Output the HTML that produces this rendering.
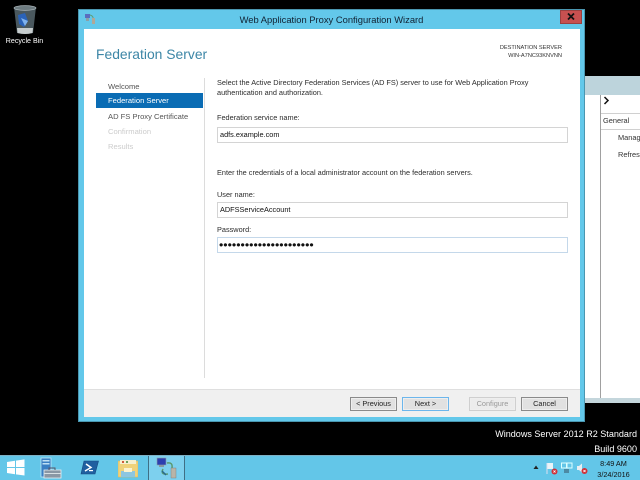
<!DOCTYPE html>
<html><head><meta charset="utf-8"><style>
html,body{margin:0;padding:0;background:#000;width:640px;height:480px;overflow:hidden}
body{position:relative;font-family:"Liberation Sans",sans-serif;font-size:7.33px;color:#2c2c2c}
.a{position:absolute;white-space:nowrap}
.inp{position:absolute;left:217px;width:349px;height:14px;background:#fff;border:1px solid #d4d4d4;font-size:7.33px;line-height:14px;color:#111;text-indent:2px}
.btn{position:absolute;top:397px;height:12px;background:#e1e1e1;border:1px solid #8a8a8a;box-shadow:inset 0 0 0 1px #eee;font-size:7.33px;line-height:12px;text-align:center;color:#222}
.n{left:108px;font-size:7.6px;line-height:10px}
</style></head><body>

<svg class="a" style="left:12px;top:4px" width="26" height="30" viewBox="0 0 26 30">
<path d="M2 3 L24 3 L21 29 Q13 31 5 29Z" fill="#4a585e"/>
<ellipse cx="13" cy="4" rx="11" ry="2.4" fill="#6d7b80" stroke="#aab4b8" stroke-width=".7"/>
<path d="M6 11 L13 9 L16 17 L12 23 L7 20Z" fill="#2a62b8"/>
<path d="M9 14 L16 17 L13 22Z" fill="#7fb2ee"/>
<path d="M5 24 L21 24 L20.500 29 Q13 31 5.500 29Z" fill="#c6cccd"/>
</svg>
<div class="a" style="left:0;width:49px;top:36px;text-align:center;color:#fff;font-size:7.100px;line-height:11px;">Recycle Bin</div>

<!-- background window -->
<div class="a" style="left:585px;top:76px;width:55px;height:327px;background:#fff"></div>
<div class="a" style="left:585px;top:76px;width:55px;height:19px;background:#bdd4dc"></div>
<div class="a" style="left:585px;top:398px;width:55px;height:5px;background:#c4d6dc"></div>
<div class="a" style="left:600px;top:95px;width:1px;height:303px;background:#a0a0a0"></div>
<div class="a" style="left:601px;top:113px;width:39px;height:1px;background:#d0d0d0"></div>
<div class="a" style="left:601px;top:129px;width:39px;height:1px;background:#d0d0d0"></div>
<svg class="a" style="left:603px;top:96px" width="7" height="9" viewBox="0 0 7 9"><path d="M1.500 1 L5 4.500 L1.500 8" fill="none" stroke="#111" stroke-width="1.500"/></svg>
<div class="a" style="left:603px;top:116px;font-size:7.400px;line-height:10px;color:#333">General</div>
<div class="a" style="left:618px;top:133px;font-size:7.400px;line-height:10px;color:#333">Manag</div>
<div class="a" style="left:618px;top:150px;font-size:7.400px;line-height:10px;color:#333">Refresh</div>

<!-- wizard window -->
<div class="a" style="left:79px;top:10px;width:505px;height:411px;background:#63c8ea;box-shadow:0 0 0 1px #4a96b0"></div>
<svg class="a" style="left:85px;top:13px" width="11" height="11" viewBox="0 0 11 11">
<rect x="0" y="1" width="5" height="4" fill="#5a6fc0"/><rect x="1" y="5" width="3" height="3" fill="#8aa0a8"/>
<path d="M5 2 Q9 3 8 7" fill="none" stroke="#5e9e78" stroke-width="1"/><rect x="7" y="5" width="3" height="6" fill="#b0a898"/></svg>
<div class="a" style="left:79px;width:505px;top:14px;text-align:center;font-size:9.400px;line-height:12px;color:#123">Web Application Proxy Configuration Wizard</div>
<div class="a" style="left:560px;top:10px;width:20px;height:12px;background:#c75050;border:1px solid #9a4040;"></div>
<svg class="a" style="left:566px;top:12px" width="10" height="9" viewBox="0 0 10 9"><path d="M2 1.500 L8 7.500 M8 1.500 L2 7.500" stroke="#111" stroke-width="1.800"/></svg>

<div class="a" style="left:84px;top:29px;width:496px;height:360px;background:#fff"></div>
<div class="a" style="left:84px;top:389px;width:496px;height:28px;background:#f0f0f0;border-top:1px solid #dfdfdf;box-sizing:border-box"></div>

<div class="a" style="left:96px;top:44px;font-size:13.900px;line-height:20px;color:#3c86a6;">Federation Server</div>
<div class="a" style="right:78px;top:44px;font-size:5.650px;line-height:8px;text-align:right;color:#333">DESTINATION SERVER<br>WIN-A7NC93KNVNN</div>

<div class="a" style="left:204px;top:78px;width:1px;height:300px;background:#dcdcdc"></div>
<div class="a" style="left:96px;top:93px;width:107px;height:15px;background:#0a6cb4"></div>
<div class="a n" style="top:82px;color:#555">Welcome</div>
<div class="a n" style="top:96px;color:#fff">Federation Server</div>
<div class="a n" style="top:112px;color:#555">AD FS Proxy Certificate</div>
<div class="a n" style="top:127px;color:#ccc">Confirmation</div>
<div class="a n" style="top:142px;color:#ccc">Results</div>

<div class="a" style="left:217px;top:78px;line-height:10px;">Select the Active Directory Federation Services (AD FS) server to use for Web Application Proxy<br>authentication and authorization.</div>
<div class="a" style="left:217px;top:113px;line-height:10px">Federation service name:</div>
<div class="inp" style="top:127px">adfs.example.com</div>
<div class="a" style="left:217px;top:168px;line-height:10px">Enter the credentials of a local administrator account on the federation servers.</div>
<div class="a" style="left:217px;top:190px;line-height:10px">User name:</div>
<div class="inp" style="top:202px">ADFSServiceAccount</div>
<div class="a" style="left:217px;top:225px;line-height:10px">Password:</div>
<div class="inp" style="top:237px;border-color:#c4d8ea;font-size:12.300px;line-height:15px;text-indent:1px">••••••••••••••••••••••</div>

<div class="btn" style="left:350px;width:45px">&lt; Previous</div>
<div class="btn" style="left:402px;width:45px;border-color:#6cb6ec">Next &gt;</div>
<div class="btn" style="left:469px;width:45px;border-color:#cfcfcf;background:#ececec;color:#999">Configure</div>
<div class="btn" style="left:521px;width:45px">Cancel</div>

<div class="a" style="right:3px;top:428px;color:#fff;font-size:9.050px;line-height:13px">Windows Server 2012 R2 Standard</div>
<div class="a" style="right:3px;top:443px;color:#fff;font-size:9.050px;line-height:13px">Build 9600</div>

<!-- taskbar -->
<div class="a" style="left:0;top:455px;width:640px;height:25px;background:#63c6e8;border-top:1px solid #7fb0c4;box-sizing:border-box"></div>
<div class="a" style="left:148px;top:456px;width:37px;height:24px;background:#7dd0ee;border-left:1px solid #3f6f85;border-right:1px solid #3f6f85;box-sizing:border-box"></div>
<svg class="a" style="left:7px;top:459px" width="18" height="17" viewBox="0 0 18 17"><path d="M0 3 L8 1.800 V8 H0Z M9 1.600 L17.500 .400 V8 H9Z M0 9 H8 V15.200 L0 14Z M9 9 H17.500 V16.500 L9 15.400Z" fill="#fff"/></svg>
<svg class="a" style="left:40px;top:457px" width="22" height="22" viewBox="0 0 22 22">
<rect x="1" y="1" width="10" height="19" fill="#3a80c4" stroke="#bfe6f6" stroke-width=".8"/><rect x="2.500" y="3" width="7" height="1.500" fill="#bfe0f4"/><rect x="2.500" y="6" width="7" height="1.500" fill="#bfe0f4"/>
<rect x="4" y="13" width="17" height="8" fill="#8a97a4" stroke="#e6eef2" stroke-width=".8"/><path d="M9 13 V11 H15 V13" fill="none" stroke="#556" stroke-width="1"/><rect x="4.500" y="16" width="16" height="1" fill="#d8e0e4"/></svg>
<svg class="a" style="left:80px;top:460px" width="19" height="15" viewBox="0 0 19 15"><path d="M4 1 H18.500 L15 14 H1Z" fill="#1f5fa0" stroke="#154a80" stroke-width=".6"/><path d="M6 4 L11 7.500 L5 11" fill="none" stroke="#fff" stroke-width="1.500"/><rect x="9" y="10" width="4" height="1.200" fill="#fff"/></svg>
<svg class="a" style="left:118px;top:459px" width="20" height="19" viewBox="0 0 20 19"><path d="M0 2 H20 V18 H0Z" fill="#efd27a" stroke="#d8b65c" stroke-width=".6"/><rect x="2" y="1" width="16" height="4" fill="#f6f0d0"/><rect x="4" y="2" width="2" height="2" fill="#d05a3a"/><rect x="8" y="2" width="2" height="2" fill="#6aa05a"/><rect x="3" y="12" width="14" height="6" fill="#8cc6e0"/><rect x="6" y="9" width="8" height="4" fill="#fbf3d0"/></svg>
<svg class="a" style="left:156px;top:457px" width="22" height="22" viewBox="0 0 22 22"><rect x="1" y="1" width="9" height="7" fill="#2c3fb0" stroke="#8ea0a8" stroke-width=".6"/><rect x="3" y="8" width="5" height="2" fill="#8899a0"/><path d="M7 12 Q4 18 12 17 M11 6 Q17 5 16 11" fill="none" stroke="#5a9a70" stroke-width="1.500"/><path d="M6 14 L10 18" stroke="#2a6a8a" stroke-width="1.500"/><rect x="15" y="11" width="5" height="10" fill="#b8b4a8" stroke="#777" stroke-width=".4"/></svg>

<svg class="a" style="left:533px;top:465px" width="6" height="5" viewBox="0 0 6 5"><path d="M3 .5 L5.500 4 H.5Z" fill="#222"/></svg>
<svg class="a" style="left:546px;top:462px" width="12" height="13" viewBox="0 0 12 13"><path d="M1 1 V12" stroke="#dde" stroke-width="1"/><path d="M1.500 1 H7 V7 H1.500Z" fill="#eaf4f8"/><circle cx="8.500" cy="9.500" r="3" fill="#d03038"/><path d="M7.500 8.500 L9.500 10.500 M9.500 8.500 L7.500 10.500" stroke="#fff" stroke-width=".8"/></svg>
<svg class="a" style="left:561px;top:462px" width="12" height="12" viewBox="0 0 12 12"><rect x="0.500" y="1" width="5" height="5" fill="none" stroke="#dff" stroke-width="1"/><rect x="6" y="1" width="5" height="5" fill="none" stroke="#dff" stroke-width="1"/><rect x="3" y="7" width="5" height="4" fill="#4c8aa4"/></svg>
<svg class="a" style="left:576px;top:462px" width="12" height="13" viewBox="0 0 12 13"><path d="M1 4 H3 L6 1.500 V10.500 L3 8 H1Z" fill="#e8eef2"/><circle cx="8.500" cy="9" r="3" fill="#d03038"/><path d="M7.500 8 L9.500 10 M9.500 8 L7.500 10" stroke="#fff" stroke-width=".8"/></svg>
<div class="a" style="left:590px;width:47px;top:458px;text-align:center;font-size:7.300px;line-height:11px;color:#111">8:49 AM</div>
<div class="a" style="left:590px;width:47px;top:469px;text-align:center;font-size:7.300px;line-height:11px;color:#111">3/24/2016</div>

</body></html>
